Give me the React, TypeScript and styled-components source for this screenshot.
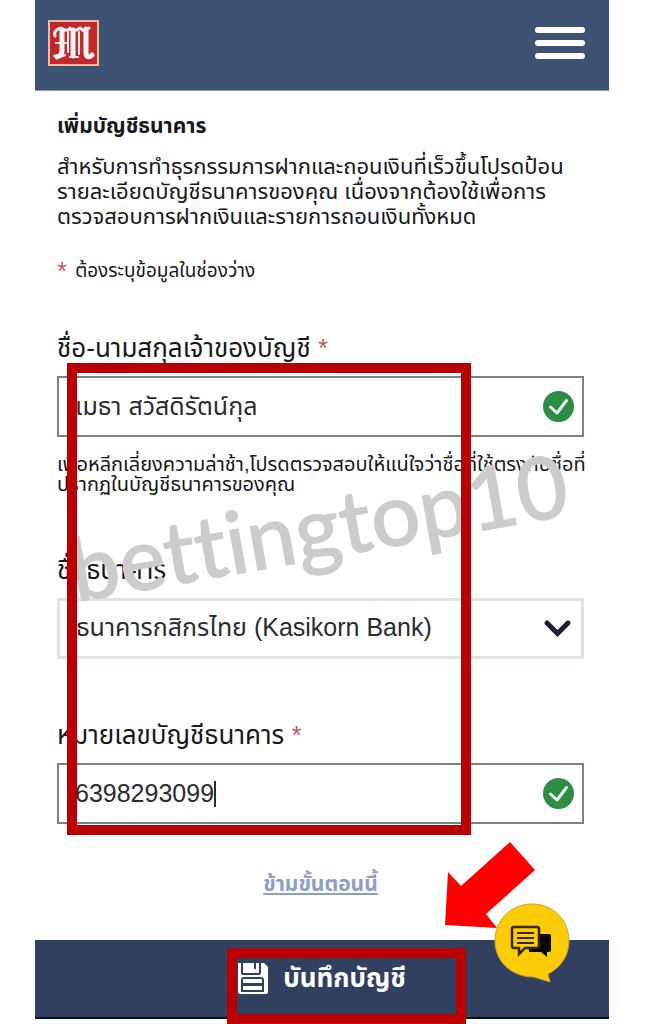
import React from "react";
import styled, { createGlobalStyle } from "styled-components";

const GlobalStyle = createGlobalStyle`
  * { box-sizing: border-box; }
  body {
    margin: 0;
    background: #ffffff;
    color: #16181c;
    font-family: "Liberation Sans", "Noto Sans Thai", sans-serif;
  }
`;

const Page = styled.div`
  position: relative;
  margin: 0 39px 0 35px;
  padding-bottom: 5px;
`;

const Header = styled.header`
  display: flex;
  align-items: center;
  justify-content: space-between;
  height: 91px;
  padding: 0 24px 4px 13px;
  background: #3e5273;
  border-bottom: 1px solid #8a96ab;
`;

const LogoLink = styled.a`
  display: block;
  height: 46px;
`;

const MenuButton = styled.button`
  display: flex;
  flex-direction: column;
  gap: 7px;
  padding: 0;
  border: 0;
  background: none;
`;

const MenuBar = styled.span`
  width: 50px;
  height: 6px;
  border-radius: 3px;
  background: #ffffff;
`;

const Form = styled.form`
  display: flex;
  flex-direction: column;
`;

const Content = styled.div`
  display: flex;
  flex-direction: column;
  padding: 23px 25px 44px 22px;
`;

const Title = styled.h1`
  margin: 0;
  font-size: 21px;
  line-height: 24px;
  font-weight: 700;
`;

const Intro = styled.p`
  margin: 16px 0 0;
  font-size: 22px;
  line-height: 25px;
  white-space: nowrap;
`;

const RequiredNote = styled.p`
  display: flex;
  gap: 8px;
  margin: 32px 0 53px;
  font-size: 19px;
  line-height: 20px;
`;

const Star = styled.span`
  color: #c4575a;
  font-size: 26px;
`;

const Fields = styled.div`
  position: relative;
  display: flex;
  flex-direction: column;
  gap: 62px;
`;

const Field = styled.div`
  display: flex;
  flex-direction: column;
`;

const Label = styled.label`
  margin-bottom: 14px;
  font-size: 26px;
  line-height: 28px;
`;

const Box = styled.div<{ $muted?: boolean }>`
  display: flex;
  align-items: center;
  height: 61px;
  padding: 0 8px 0 16px;
  border: ${(p) => (p.$muted ? "3px solid #dfe3e8" : "2px solid #7a808c")};
  background: #ffffff;
`;

const TextInput = styled.input`
  field-sizing: content;
  padding: 0;
  border: 0;
  outline: 0;
  background: none;
  color: #2a2c30;
  font: 25px "Liberation Sans", "Noto Sans Thai", sans-serif;
`;

const Caret = styled.span`
  width: 2px;
  height: 26px;
  background: #2a2c30;
`;

const BankSelect = styled.select`
  flex: 1;
  appearance: none;
  padding: 0 0 3px;
  border: 0;
  background: none;
  color: #2a2c30;
  font: 25px "Liberation Sans", "Noto Sans Thai", sans-serif;
`;

const Trailing = styled.span`
  display: flex;
  margin-left: auto;
`;

const Help = styled.p`
  margin: 17px 0 0;
  font-size: 20px;
  line-height: 20px;
  white-space: nowrap;
`;

const SkipLink = styled.a`
  align-self: center;
  margin-top: 48px;
  color: #8f9ccb;
  font-size: 21px;
  line-height: 24px;
  font-weight: 700;
`;

const Footer = styled.footer`
  position: relative;
  display: flex;
  justify-content: center;
  height: 79px;
  background: #32405f;
  border-bottom: 2px solid #0c0f18;
`;

const SaveButton = styled.button`
  display: flex;
  align-items: center;
  gap: 15px;
  padding: 0;
  border: 0;
  background: none;
  color: #ffffff;
  font: 700 26px "Liberation Sans", "Noto Sans Thai", sans-serif;
`;

const ChatButton = styled.button`
  position: absolute;
  right: 39px;
  top: -37px;
  padding: 0;
  border: 0;
  background: none;
`;

const Marker = styled.div`
  position: absolute;
  border: 10px solid #bb0003;
  pointer-events: none;
`;

const FieldsMarker = styled(Marker)`
  left: 10px;
  right: 113px;
  top: 29px;
  bottom: -11px;
`;

const SaveMarker = styled(Marker)`
  left: 192px;
  right: 143px;
  top: 8px;
  bottom: -7px;
`;

const Arrow = styled.svg`
  position: absolute;
  right: 73px;
  top: -99px;
  pointer-events: none;
`;

const Watermark = styled.div`
  position: absolute;
  left: 22px;
  top: 185px;
  color: #cdcccd;
  font: 500 87px/100px Lato, sans-serif;
  font-variant-ligatures: none;
  -webkit-text-stroke: 1px #cdcccd;
  transform: rotate(-10deg);
  transform-origin: left bottom;
  pointer-events: none;
`;

function Logo() {
  return (
    <svg width="51" height="46" viewBox="0 0 51 46" fill="none">
      <rect x="1" y="1" width="49" height="44" fill="#c1272d" stroke="#e8c0a0" strokeWidth="2" />
      <g stroke="#fff3f1" strokeLinecap="round" strokeLinejoin="round">
        <path d="M7 16c-2-5 4-9 8-7 3 2 5 2 7-1M22 9c4 2 7 2 10-1l4 3 5-3" strokeWidth="3" />
        <path d="M14 10v21c0 3-2 5-5 6M25 10v26M38 9v24c0 4 3 5 6 2" strokeWidth="5" />
        <path d="M20 12v20M31 12v22M8 23h10M6 36c4-3 7 3 11-1M22 37h8" strokeWidth="2" />
      </g>
    </svg>
  );
}

function CheckIcon() {
  return (
    <svg width="31" height="31" viewBox="0 0 31 31" fill="none">
      <circle cx="15.500" cy="15.500" r="15.500" fill="#2d8c46" />
      <path d="M7.500 16l6.500 6L23.500 9.500" stroke="#effff0" strokeWidth="3" strokeLinecap="round" strokeLinejoin="round" />
    </svg>
  );
}

function ChevronIcon() {
  return (
    <svg width="30" height="20" viewBox="0 0 30 20" fill="none">
      <path d="M4 4l10.500 10.500L25 4" stroke="#1b2033" strokeWidth="5" strokeLinecap="round" />
    </svg>
  );
}

function SaveIcon() {
  return (
    <svg width="30" height="31" viewBox="0 0 30 31" fill="none">
      <path d="M0 0h26l4 4v25q0 2-2 2H2q-2 0-2-2z" fill="#ffffff" />
      <path d="M4 0v10q0 1 1 1h16q1 0 1-1V0" stroke="#32405f" strokeWidth="2" />
      <path d="M16 0h2v6h-2z" fill="#32405f" />
      <path d="M4 17q0-2 2-2h17q2 0 2 2v11H4z" fill="#ffffff" stroke="#32405f" strokeWidth="2" />
      <path d="M5 21.500h19" stroke="#32405f" strokeWidth="3" />
    </svg>
  );
}

function ChatIcon() {
  return (
    <svg width="76" height="80" viewBox="0 0 76 80">
      <path d="M38 1C59 1 75 17 75 38c0 15-9 27-21 33l2 8-16-5C17 74 1 58 1 38 1 17 17 1 38 1z" fill="#fdcc09" stroke="#c9a529" strokeWidth="1" />
      <path d="M46 31h9q2 0 2 2v14q0 2-2 2h-2v5l-6-5H35v-4h11z" fill="#0c0803" />
      <path d="M20 24h23q2 0 2 2v17q0 2-2 2H31l-6 6v-6h-5q-2 0-2-2V26q0-2 2-2z" fill="#fdcc09" stroke="#3b2506" strokeWidth="2.500" />
      <path d="M23 30h17M23 35h17M23 40h17" stroke="#3b2506" strokeWidth="2" />
    </svg>
  );
}

export default function App() {
  return (
    <>
      <GlobalStyle />
      <Page>
        <Header>
          <LogoLink href="#" aria-label="M">
            <Logo />
          </LogoLink>
          <MenuButton type="button" aria-label="เมนู">
            <MenuBar />
            <MenuBar />
            <MenuBar />
          </MenuButton>
        </Header>
        <Form onSubmit={(e) => e.preventDefault()}>
          <Content>
            <Title>เพิ่มบัญชีธนาคาร</Title>
            <Intro>
              สำหรับการทำธุรกรรมการฝากและถอนเงินที่เร็วขึ้นโปรดป้อน
              <br />
              รายละเอียดบัญชีธนาคารของคุณ เนื่องจากต้องใช้เพื่อการ
              <br />
              ตรวจสอบการฝากเงินและรายการถอนเงินทั้งหมด
            </Intro>
            <RequiredNote>
              <Star>*</Star> ต้องระบุข้อมูลในช่องว่าง
            </RequiredNote>
            <Fields>
              <Field>
                <Label htmlFor="owner">
                  ชื่อ-นามสกุลเจ้าของบัญชี <Star>*</Star>
                </Label>
                <Box>
                  <TextInput id="owner" defaultValue="เมธา สวัสดิรัตน์กุล" />
                  <Trailing>
                    <CheckIcon />
                  </Trailing>
                </Box>
                <Help>
                  เพื่อหลีกเลี่ยงความล่าช้า,โปรดตรวจสอบให้แน่ใจว่าชื่อที่ใช้ตรงกับชื่อที่
                  <br />
                  ปรากฏในบัญชีธนาคารของคุณ
                </Help>
              </Field>
              <Field>
                <Label htmlFor="bank">
                  ชื่อธนาคาร <Star>*</Star>
                </Label>
                <Box $muted>
                  <BankSelect id="bank">
                    <option>ธนาคารกสิกรไทย (Kasikorn Bank)</option>
                  </BankSelect>
                  <Trailing>
                    <ChevronIcon />
                  </Trailing>
                </Box>
              </Field>
              <Field>
                <Label htmlFor="account">
                  หมายเลขบัญชีธนาคาร <Star>*</Star>
                </Label>
                <Box>
                  <TextInput id="account" defaultValue="6398293099" />
                  <Caret />
                  <Trailing>
                    <CheckIcon />
                  </Trailing>
                </Box>
              </Field>
              <Watermark>bettingtop10</Watermark>
              <FieldsMarker />
            </Fields>
            <SkipLink href="#">ข้ามขั้นตอนนี้</SkipLink>
          </Content>
          <Footer>
            <SaveButton type="submit">
              <SaveIcon />
              บันทึกบัญชี
            </SaveButton>
            <Arrow width="92" height="88" viewBox="0 0 92 88">
              <path d="M66 1L91 29 42 73 53 87 1 84 4 31 17 45z" fill="#fe0000" />
            </Arrow>
            <ChatButton type="button" aria-label="แชท">
              <ChatIcon />
            </ChatButton>
            <SaveMarker />
          </Footer>
        </Form>
      </Page>
    </>
  );
}
